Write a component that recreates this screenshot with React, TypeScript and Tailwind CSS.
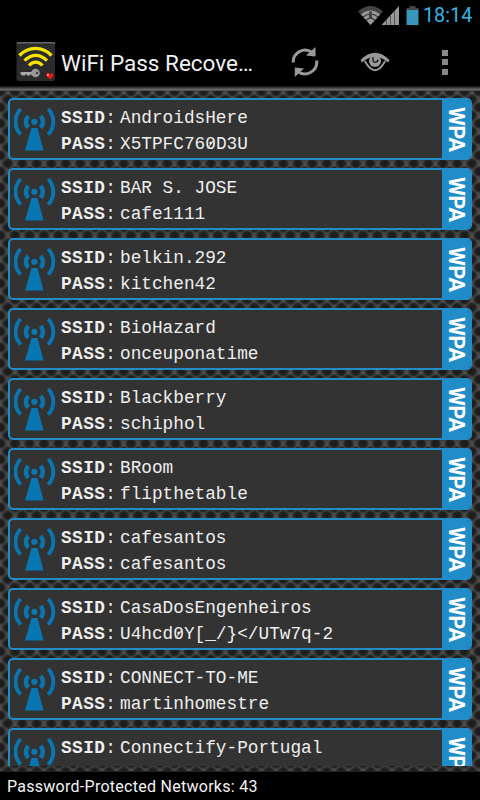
import React from "react";

const networks = [
  ["AndroidsHere", "X5TPFC760D3U"],
  ["BAR S. JOSE", "cafe1111"],
  ["belkin.292", "kitchen42"],
  ["BioHazard", "onceuponatime"],
  ["Blackberry", "schiphol"],
  ["BRoom", "flipthetable"],
  ["cafesantos", "cafesantos"],
  ["CasaDosEngenheiros", "U4hcd0Y[_/}</UTw7q-2"],
  ["CONNECT-TO-ME", "martinhomestre"],
  ["Connectify-Portugal", ""],
];

function Mesh() {
  return (
    <svg className="absolute inset-0 h-full w-full" aria-hidden="true">
      <defs>
        <radialGradient id="hole">
          <stop offset="0" stopColor="#181818" />
          <stop offset=".6" stopColor="#222" />
          <stop offset="1" stopColor="#484848" />
        </radialGradient>
        <pattern id="mesh" width="14.5" height="16" patternUnits="userSpaceOnUse" x="0.5" y="0">
          <rect width="14.5" height="16" fill="#494949" />
          <path d="M0 0L7.250 8L14.500 0M0 16L7.250 8L14.500 16" stroke="#525252" strokeWidth="1.200" fill="none" />
          <ellipse cx="7.25" cy="13.5" rx="6.2" ry="6" fill="url(#hole)" />
          <ellipse cx="7.25" cy="-2.5" rx="6.2" ry="6" fill="url(#hole)" />
          <ellipse cx="0" cy="5.500" rx="6.200" ry="6" fill="url(#hole)" />
          <ellipse cx="14.500" cy="5.500" rx="6.200" ry="6" fill="url(#hole)" />
        </pattern>
      </defs>
      <rect width="100%" height="100%" fill="url(#mesh)" />
    </svg>
  );
}

function Tower() {
  return (
    <svg className="ml-[4px] mt-[5px] h-[46px] w-[42px] shrink-0" viewBox="0 0 42 46" fill="none" stroke="#0877b1">
      <circle cx="20.4" cy="16.8" r="3.1" fill="#0877b1" stroke="none" />
      <path d="M17.500 23h6l6 22.500h-18.500z" fill="#0877b1" stroke="none" />
      <path d="M14.200 11A8.900 8.900 0 0 0 14.200 22.800M26.600 11A8.900 8.900 0 0 1 26.600 22.800" strokeWidth="4.400" />
      <path d="M6.600 4A18.500 18.500 0 0 0 6.600 29.500M34.200 4A18.500 18.500 0 0 1 34.200 29.500" strokeWidth="3.900" />
    </svg>
  );
}

// A zero with a diagonal stroke through it
function Zero() {
  return (
    <span className="relative">
      0
      <span className="absolute left-1/2 top-1/2 h-[1.3px] w-[11px] -translate-x-1/2 -translate-y-1/2 -rotate-[52deg] bg-[#e4e4e4]" />
    </span>
  );
}

function Line({ label, value }: { label: string; value: string }) {
  const parts = value.split("0");
  return (
    <div className="flex h-[26px] items-center whitespace-pre leading-[26px] text-[#efefef]">
      <span className="w-[48px] text-[17.8px] font-bold tracking-[0.4px]">{label}<span className="font-normal">:</span></span>
      <span className="ml-[11px] text-[17.75px]">
        {parts.map((part, i) => <React.Fragment key={i}>{i > 0 && <Zero />}{part}</React.Fragment>)}
      </span>
    </div>
  );
}

function Card({ ssid, pass }: { ssid: string; pass: string }) {
  return (
    <div className="flex h-[62px] shrink-0 overflow-hidden rounded-[5px] border-2 border-[#218dc8] bg-[#333]">
      <Tower />
      <div className="ml-[5px] mt-[5px] flex-1 font-['Liberation_Mono',monospace]">
        <Line label="SSID" value={ssid} />
        {pass && <Line label="PASS" value={pass} />}
      </div>
      <div className="flex w-[28px] shrink-0 items-center justify-center bg-[#218dc8]">
        <span className="mr-[1px] font-['Roboto',sans-serif] text-[21.5px] font-bold leading-[28px] tracking-[-0.2px] text-white [writing-mode:vertical-rl]">WPA</span>
      </div>
    </div>
  );
}

export default function App() {
  return (
    <div className="flex h-[800px] w-[480px] flex-col overflow-hidden bg-black font-['Roboto',sans-serif]">
      <div className="flex h-[38px] shrink-0 items-start justify-end pr-[8px]">
        <svg className="mt-[5px] h-[22px] w-[62px]" viewBox="0 0 62 22" fill="none">
          <path d="M0 6.500C8-.9 17-.9 25 6.500L12.500 20z" fill="#444" />
          <path d="M3 9.500C9 4 16 4 22 9.500L12.500 20z" fill="#999" />
          <path d="M5 12c5-4 10-4 15 0M8 15.500c3-3 6-3 9 0" stroke="#333" strokeWidth="1.200" />
          <path d="M12.500 6.500v7" stroke="#444" strokeWidth="3" />
          <path d="M23.500 20L41 1v19z" fill="#999" />
          <path d="M28.500 15v5M32.500 11v9M36.500 6v14" stroke="#555" />
          <path d="M48.500 3h3V1h6v2h3v2h-12z" fill="#444" />
          <path d="M48.500 5h12v15h-12z" fill="#3995b9" />
        </svg>
        <span className="ml-[3px] mt-[4px] w-[49px] whitespace-nowrap text-[19.8px] leading-[24px] text-[#33b5e5]">18:14</span>
      </div>
      <div className="flex h-[48px] shrink-0 items-center">
        <svg className="ml-[16px] h-[40px] w-[40px]" viewBox="0 0 40 40" fill="none">
          <rect x=".5" y="0" width="38.5" height="39" rx="2.5" fill="#2b2b2b" />
          <path d="M1 1.800Q1.500 .8 3 .8h33.500Q38.500 .8 39 1.800" stroke="#666" strokeWidth="1.600" />
          <path d="M3.500 13.500c9-9.500 23-9.500 32 0M8.500 18.700c7-7 15.500-7 22.500 0M13 23.500c4-4.500 9.500-4.500 13.500 0" stroke="#f4e300" strokeWidth="3.300" />
          <path d="M4 31l1.500-1h13v2.500H14v1H11v-1H9v1H6z" fill="#aaa" />
          <circle cx="19.500" cy="31" r="4.300" fill="#999" />
          <circle cx="21" cy="31" r="1.300" fill="#444" />
          <path d="M34.300 37.500l-4-3.600c-.5-3.500 3-4 3.700-1.500 1-2 4-1 3.300 1.500z" fill="#ee1818" />
          <circle cx="32" cy="33" r="1.100" fill="#ff9c9c" />
        </svg>
        <span className="ml-[5px] w-[200px] whitespace-nowrap text-[22.5px] leading-[30px] text-[#f0f0f0]"><span className="relative top-[1px]">WiFi Pass Recove…</span></span>
        <svg className="ml-[30px] h-[30px] w-[28px]" viewBox="0 0 28 30" fill="none" stroke="#999" strokeWidth="3">
          <path d="M2.200 15.500A11.800 11.800 0 0 1 21 5.500M25.600 13.500A11.800 11.800 0 0 1 6.800 24.500" />
          <path d="M24.500 0v9.500l-9.500-1z M3.800 30v-9.500l9.200 1z" fill="#999" stroke="none" />
        </svg>
        <svg className="ml-[41px] h-[20px] w-[30px]" viewBox="0 0 30 20" fill="none">
          <path d="M.5 8Q15-6.500 29.500 8L28 10.500Q15-1 2 10.500z" fill="#999" />
          <path d="M4.800 9q10.200 18.400 20.400 0" stroke="#999" strokeWidth="2" />
          <circle cx="15" cy="9" r="6" fill="#999" />
          <path d="M13 5v3q0 2.400 2.600 2.200 2.400-.2 2.200-2.700" stroke="#111" strokeWidth="1.300" />
        </svg>
        <div className="ml-[52px] flex flex-col gap-[3.500px]">
          <i className="h-[6px] w-[6px] bg-[#888]" />
          <i className="h-[6px] w-[6px] bg-[#888]" />
          <i className="h-[6px] w-[6px] bg-[#888]" />
        </div>
      </div>
      <div className="relative h-[685px] shrink-0 overflow-hidden bg-[#444]">
        <Mesh />
        <div className="relative h-[5px] border-b border-[#505050] bg-linear-to-b from-[#111] to-[#777]" />
        <div className="relative flex h-[675px] flex-col gap-[8px] overflow-hidden px-[8px] pt-[7px]">
          {networks.map(([ssid, pass]) => <Card key={ssid} ssid={ssid} pass={pass} />)}
        </div>
      </div>
      <div className="h-[29px] border-t border-[#222] pl-[7px] pt-[1px] text-[16px] leading-[27px] tracking-[0.27px] text-[#f3f3f3]">Password-Protected Networks: 43</div>
    </div>
  );
}
